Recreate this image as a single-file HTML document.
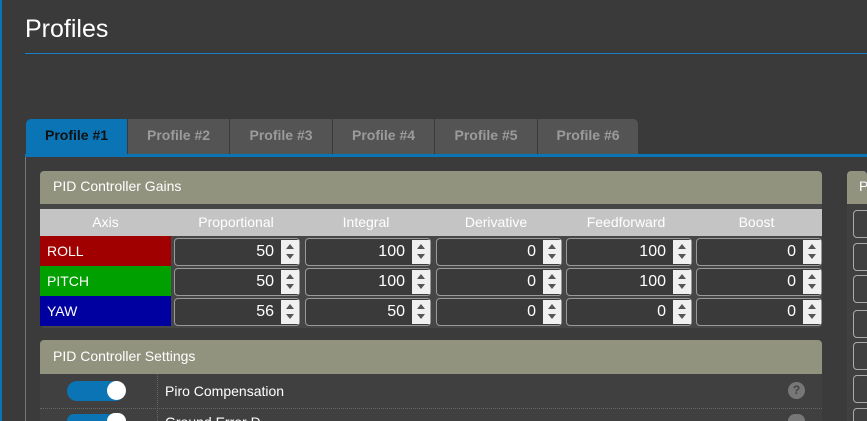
<!DOCTYPE html>
<html style="width:867px;height:421px;overflow:hidden"><head><meta charset="utf-8"><style>
*{margin:0;padding:0;box-sizing:border-box}
body{width:867px;height:421px;overflow:hidden;background:#393a39;font-family:"Liberation Sans",sans-serif;position:relative;color:#fff}
.a{position:absolute}
.tab{position:absolute;top:119px;height:35px;background:#545454;color:#9b9b9b;font-weight:bold;font-size:14px;text-align:center;line-height:33px;border-radius:0}
.hdr{position:absolute;background:#91937f;color:#fff;font-size:14px;padding-left:13px;border-radius:4px 4px 0 0}
.th{position:absolute;top:209px;height:27px;line-height:27px;font-size:14px;color:#fff;text-align:center}
.inp{position:absolute;height:28px;border:1px solid #9a9a9a;border-radius:4px;background:#3a3a3a;font-size:16px;text-align:right;line-height:26px;padding-right:25px}
.inp i{position:absolute;right:0;top:1px;width:18px;height:24px;background:#f0f0f0}
.inp i:before{content:"";position:absolute;left:5px;top:4px;border:4px solid transparent;border-bottom:5px solid #555;border-top:0}
.inp i:after{content:"";position:absolute;left:5px;top:14px;border:4px solid transparent;border-top:5px solid #555;border-bottom:0}
.ax{position:absolute;left:40px;width:131px;height:30px;line-height:30px;font-size:14px;padding-left:7px}
.rb{position:absolute;left:853px;width:20px;height:28px;border:1px solid #aaa;border-radius:4px}
</style></head><body>
<div class="a" style="left:0;top:0;width:2px;height:421px;background:#0a74b5"></div>
<div class="a" style="left:25px;top:15px;font-size:25px;color:#fff">Profiles</div>
<div class="a" style="left:25px;top:53px;width:842px;height:1px;background:#1a80c4"></div>

<div class="tab" style="left:26px;width:101px;background:#0a74b5;color:#111;border-radius:5px 0 0 0">Profile #1</div>
<div class="tab" style="left:128px;width:101px">Profile #2</div>
<div class="tab" style="left:230px;width:102px">Profile #3</div>
<div class="tab" style="left:333px;width:101px">Profile #4</div>
<div class="tab" style="left:435px;width:102px">Profile #5</div>
<div class="tab" style="left:538px;width:100px;border-radius:0 5px 0 0">Profile #6</div>
<div class="a" style="left:25px;top:154px;width:842px;height:3px;background:#0a74b5"></div>
<div class="a" style="left:25px;top:157px;width:842px;height:264px;background:#3b3b3b;border-left:1px solid #777"></div>

<div class="a" style="left:40px;top:171px;width:782px;height:157px;background:#464646;border-radius:4px"></div>
<div class="hdr" style="left:40px;top:171px;width:782px;height:33px;line-height:31px">PID Controller Gains</div>
<div class="a" style="left:40px;top:209px;width:782px;height:27px;background:#c4c4c4"></div>
<div class="th" style="left:40px;width:131px">Axis</div>
<div class="th" style="left:171px;width:130px">Proportional</div>
<div class="th" style="left:301px;width:130px">Integral</div>
<div class="th" style="left:431px;width:130px">Derivative</div>
<div class="th" style="left:561px;width:130px">Feedforward</div>
<div class="th" style="left:691px;width:131px">Boost</div>

<div class="ax" style="top:236px;background:#a00000">ROLL</div>
<div class="ax" style="top:266px;background:#00a000">PITCH</div>
<div class="ax" style="top:296px;background:#0000a0">YAW</div>

<div class="inp" style="left:174px;top:238px;width:126px">50<i></i></div>
<div class="inp" style="left:305px;top:238px;width:126px">100<i></i></div>
<div class="inp" style="left:436px;top:238px;width:126px">0<i></i></div>
<div class="inp" style="left:566px;top:238px;width:126px">100<i></i></div>
<div class="inp" style="left:696px;top:238px;width:126px">0<i></i></div>
<div class="inp" style="left:174px;top:268px;width:126px">50<i></i></div>
<div class="inp" style="left:305px;top:268px;width:126px">100<i></i></div>
<div class="inp" style="left:436px;top:268px;width:126px">0<i></i></div>
<div class="inp" style="left:566px;top:268px;width:126px">100<i></i></div>
<div class="inp" style="left:696px;top:268px;width:126px">0<i></i></div>
<div class="inp" style="left:174px;top:298px;width:126px">56<i></i></div>
<div class="inp" style="left:305px;top:298px;width:126px">50<i></i></div>
<div class="inp" style="left:436px;top:298px;width:126px">0<i></i></div>
<div class="inp" style="left:566px;top:298px;width:126px">0<i></i></div>
<div class="inp" style="left:696px;top:298px;width:126px">0<i></i></div>

<div class="a" style="left:40px;top:340px;width:782px;height:81px;background:#404040;border-radius:4px 4px 0 0;overflow:hidden"></div>
<div class="hdr" style="left:40px;top:340px;width:782px;height:34px;line-height:32px">PID Controller Settings</div>
<div class="a" style="left:157px;top:374px;height:47px;border-left:1px dotted #666"></div>
<div class="a" style="left:40px;top:408px;width:782px;border-top:1px dotted #666"></div>
<div class="a" style="left:67px;top:381px;width:58px;height:20px;border-radius:10px;background:#0a74b5"></div>
<div class="a" style="left:107px;top:381px;width:19px;height:19px;border-radius:50%;background:#fff"></div>
<div class="a" style="left:67px;top:414px;width:58px;height:7px;border-radius:10px 10px 0 0;background:#0a74b5"></div>
<div class="a" style="left:107px;top:413px;width:19px;height:8px;border-radius:10px 10px 0 0;background:#fff"></div>
<div class="a" style="left:165px;top:383px;font-size:14px">Piro Compensation</div>
<div class="a" style="left:165px;top:414px;font-size:14px;height:7px;overflow:hidden">Ground Error D...</div>
<div class="a" style="left:788px;top:382px;width:17px;height:17px;border-radius:50%;background:#777;color:#444;font-size:12px;font-weight:bold;text-align:center;line-height:17px">?</div>
<div class="a" style="left:788px;top:414px;width:17px;height:7px;border-radius:9px 9px 0 0;background:#777"></div>

<div class="a" style="left:847px;top:171px;width:20px;height:250px;background:#404040;border-radius:4px 0 0 0"></div>
<div class="hdr" style="left:847px;top:171px;width:20px;height:33px;line-height:31px;padding-left:12px">P</div>
<div class="rb" style="top:210px"></div>
<div class="rb" style="top:243px"></div>
<div class="rb" style="top:275px"></div>
<div class="rb" style="top:310px"></div>
<div class="rb" style="top:342px"></div>
<div class="rb" style="top:375px"></div>
<div class="rb" style="top:408px;height:13px;border-bottom:0;border-radius:4px 0 0 0"></div>
</body></html>
